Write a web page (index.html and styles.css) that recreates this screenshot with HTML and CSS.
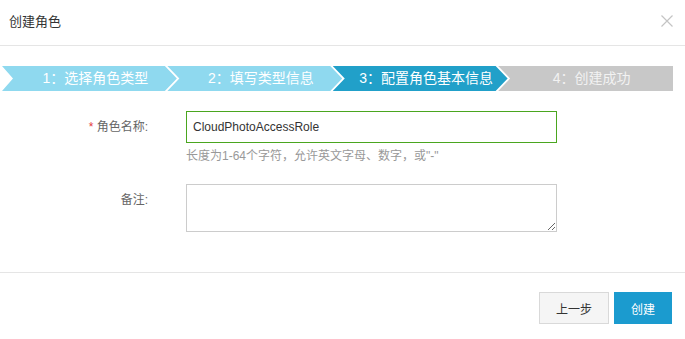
FILE: index.html
```html
<!DOCTYPE html>
<html lang="zh-CN">

<head>
    <meta charset="UTF-8">
    <meta name="viewport" content="width=device-width, initial-scale=1.0">
    <title>创建角色</title>
    <link rel="stylesheet" href="styles.css">
</head>

<body>
    <div class="dialog">
        <div class="dialog-header">
            <span class="dialog-title">创建角色</span>
            <span class="dialog-close" title="关闭">
                <svg width="12" height="12" viewBox="0 0 12 12">
                    <path d="M0.5 0.5 L11.5 11.5 M11.5 0.5 L0.5 11.5" stroke="#c4c4c4" stroke-width="1.2" fill="none" />
                </svg>
            </span>
        </div>

        <div class="dialog-body">
            <ul class="steps">
                <li class="step step-first">1：选择角色类型</li>
                <li class="step">2：填写类型信息</li>
                <li class="step step-active">3：配置角色基本信息</li>
                <li class="step step-last">4：创建成功</li>
            </ul>

            <div class="form">
                <div class="form-row">
                    <label class="form-label"><span class="required">*</span> 角色名称:</label>
                    <div class="form-control">
                        <input class="f-input" type="text" value="CloudPhotoAccessRole" />
                        <p class="form-help">长度为1-64个字符，允许英文字母、数字，或"-"</p>
                    </div>
                </div>
                <div class="form-row">
                    <label class="form-label">备注:</label>
                    <div class="form-control">
                        <textarea class="f-textarea"></textarea>
                    </div>
                </div>
            </div>
        </div>

        <div class="dialog-footer">
            <button class="btn btn-default">上一步</button>
            <button class="btn btn-primary">创建</button>
        </div>
    </div>
</body>

</html>
```

FILE: styles.css
```css
html,
body {
    margin: 0;
    padding: 0;
    background: #fff;
}

body {
    font-family: "Liberation Sans", "Noto Sans CJK SC", sans-serif;
    font-size: 12px;
    color: #333;
}

ul,
li,
p {
    margin: 0;
    padding: 0;
    list-style: none;
}

.dialog {
    width: 685px;
    height: 339px;
}

.dialog-header {
    height: 46px;
    border-bottom: 1px solid #e5e5e5;
    display: flex;
    align-items: center;
    justify-content: space-between;
    padding: 0 12px 4px 9px;
    box-sizing: border-box;
}

.dialog-title {
    font-size: 13px;
    color: #333;
}

.dialog-close {
    display: flex;
    cursor: pointer;
}

.dialog-body {
    padding: 20px 12px 0 2px;
}

/* 步骤条 */
.steps {
    display: flex;
    height: 25px;
}

.step {
    flex: 1 1 0;
    height: 25px;
    line-height: 25px;
    padding-left: 12px;
    text-align: center;
    color: #fff;
    font-size: 14px;
    background: #8fd9ef;
    clip-path: polygon(0 0, calc(100% - 12px) 0, 100% 50%, calc(100% - 12px) 100%, 0 100%, 12px 50%);
}

.step + .step {
    margin-left: -9.5px;
}

.step-first {
    clip-path: polygon(0 0, calc(100% - 12px) 0, 100% 50%, calc(100% - 12px) 100%, 0 100%, 11px 50%);
}

.step-active {
    background: #21a0c9;
}

.step-last {
    background: #c8c8c8;
    color: #f2f2f2;
    clip-path: polygon(0 0, 100% 0, 100% 100%, 0 100%, 12px 50%);
}

/* 表单 */
.form {
    padding-top: 20px;
}

.form-row {
    display: flex;
    margin-bottom: 20px;
}

.form-row:last-child {
    margin-bottom: 0;
}

.form-label {
    width: 146px;
    padding-right: 38px;
    text-align: right;
    line-height: 32px;
    color: #666;
}

.required {
    color: #e4393c;
}

.form-control {
    width: 371px;
}

.f-input {
    display: block;
    width: 100%;
    height: 32px;
    box-sizing: border-box;
    border: 1px solid #4aa61f;
    outline: none;
    padding: 0 6px;
    font: 12px "Liberation Sans", "Noto Sans CJK SC", sans-serif;
    color: #333;
}

.form-help {
    margin-top: 5px;
    line-height: 16px;
    color: #999;
}

.f-textarea {
    display: block;
    width: 100%;
    height: 48px;
    box-sizing: border-box;
    border: 1px solid #ccc;
    outline: none;
    margin: 0;
    padding: 4px 6px;
    font: 12px "Liberation Sans", "Noto Sans CJK SC", sans-serif;
}

/* 底部按钮 */
.dialog-footer {
    margin-top: 40px;
    border-top: 1px solid #e5e5e5;
    padding: 19px 13px 0 0;
    display: flex;
    justify-content: flex-end;
    gap: 5px;
}

.btn {
    height: 32px;
    padding: 0 16px;
    font: 12px "Liberation Sans", "Noto Sans CJK SC", sans-serif;
    cursor: pointer;
    box-sizing: border-box;
}

.btn-default {
    width: 70px;
    background: #f5f5f5;
    border: 1px solid #d9d9d9;
    color: #333;
}

.btn-primary {
    width: 58px;
    background: #1b9bcf;
    border: 1px solid #1b9bcf;
    color: #fff;
}
```
